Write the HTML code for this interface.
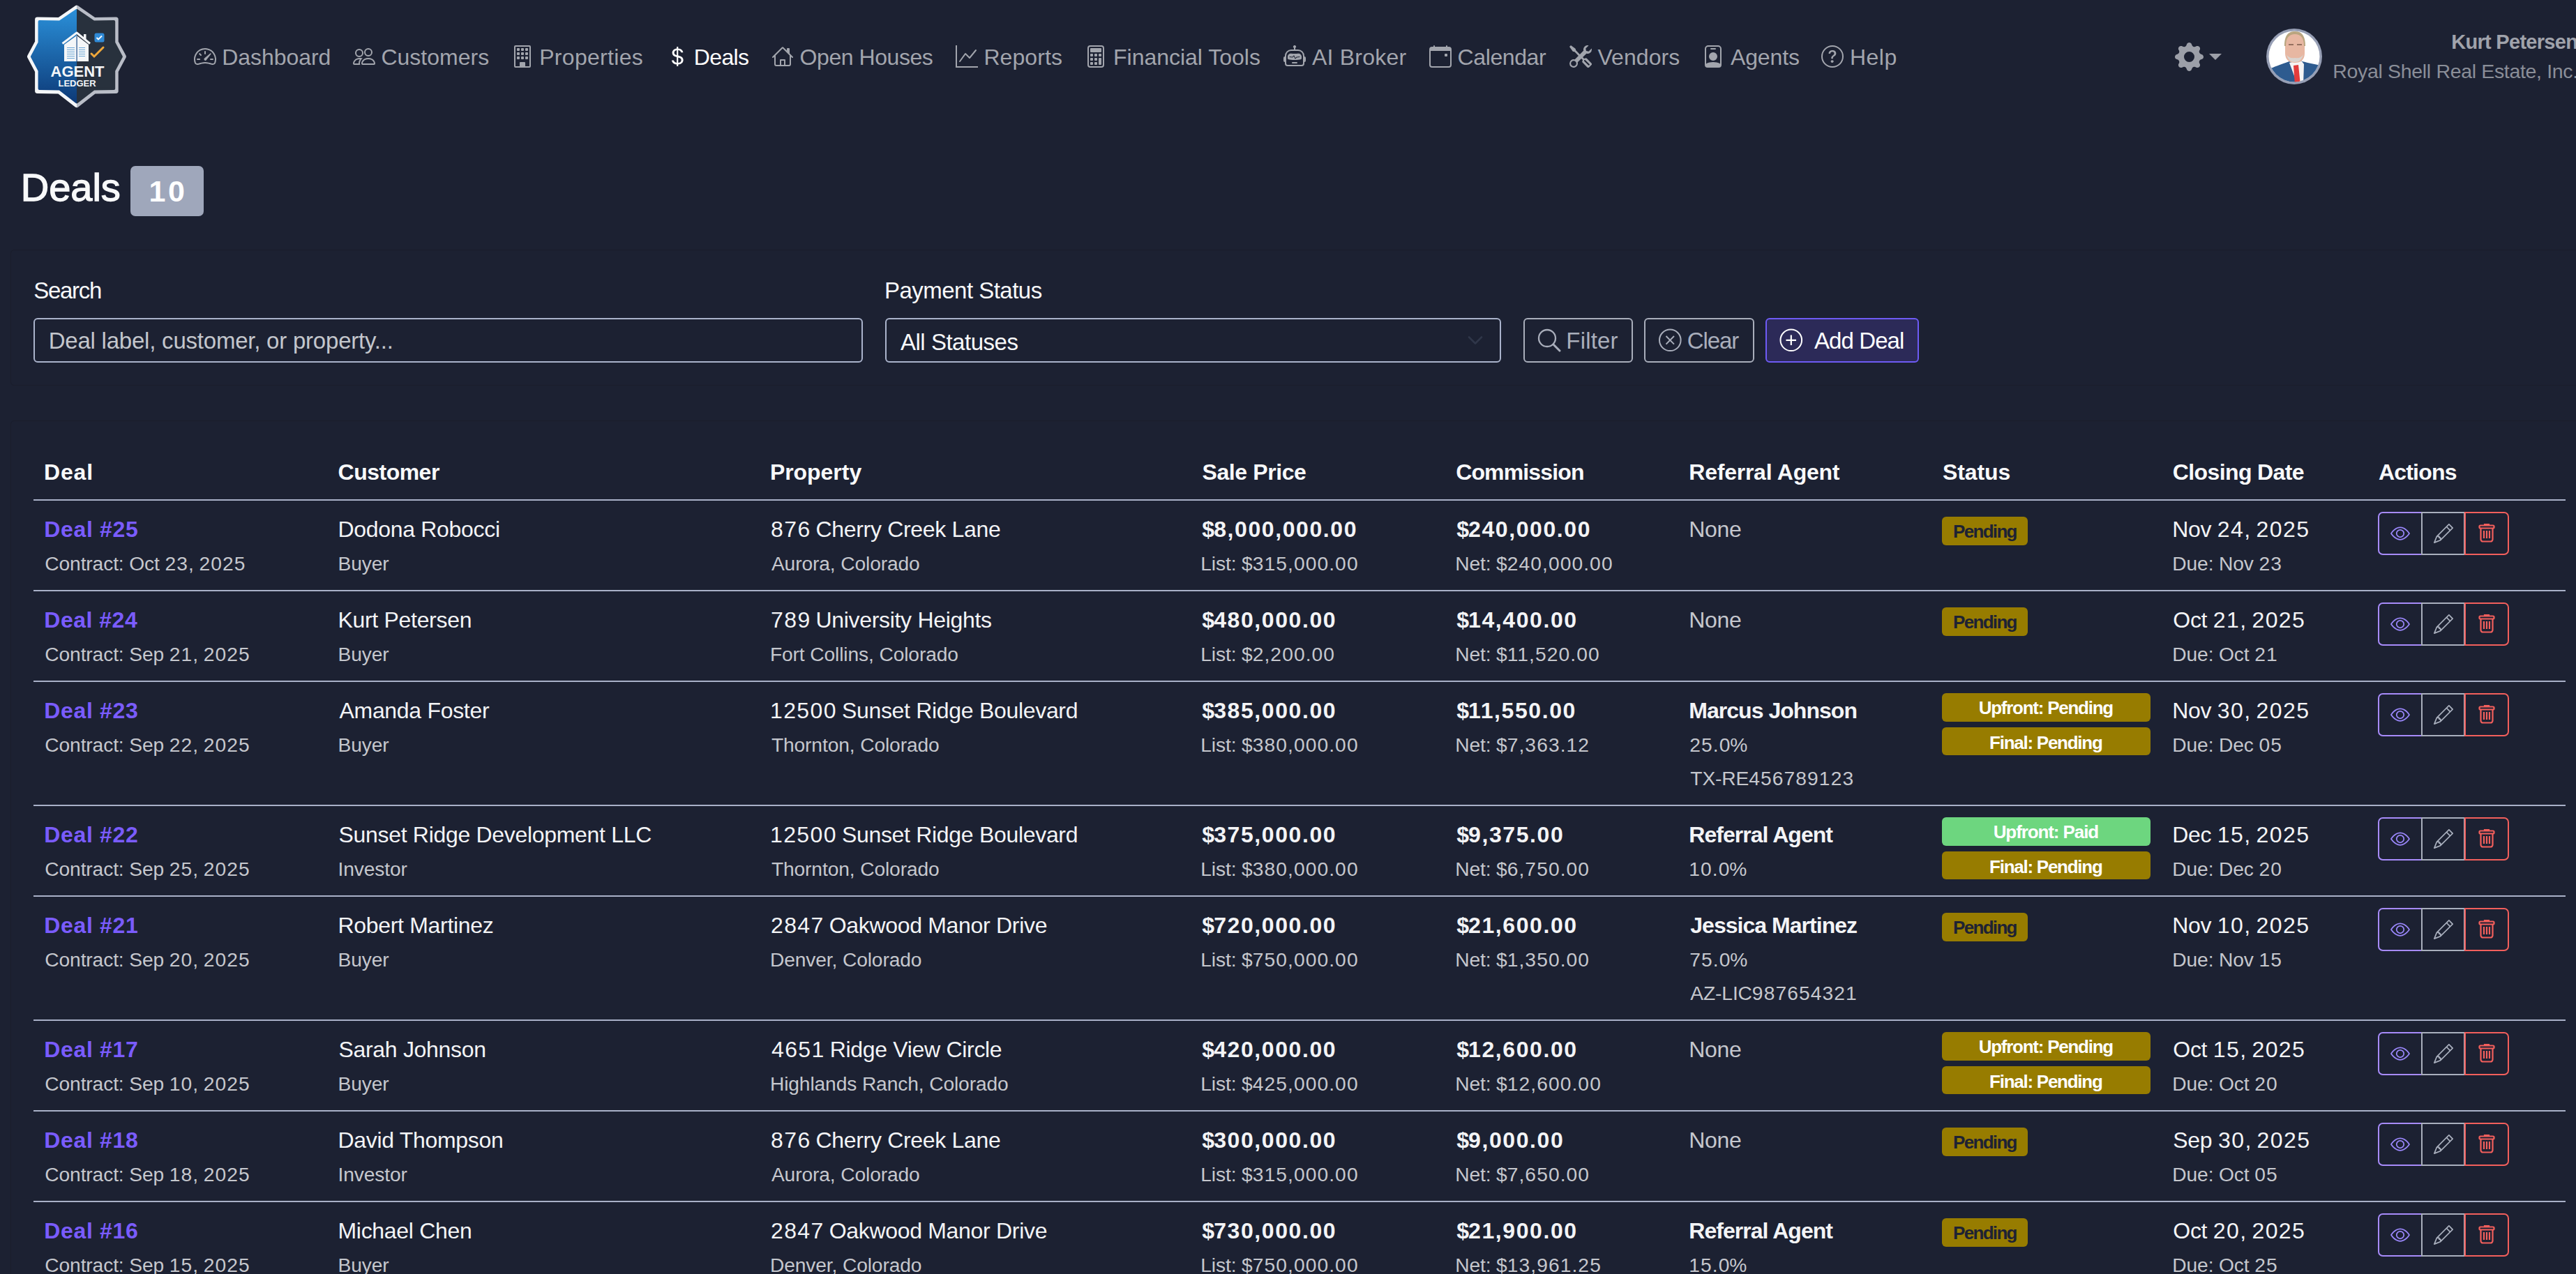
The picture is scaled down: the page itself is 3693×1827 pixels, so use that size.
<!DOCTYPE html>
<html><head><meta charset="utf-8"><style>
html,body{margin:0;padding:0}
body{width:3693px;height:1827px;overflow:hidden;position:relative;background:#1c2132;font-family:"Liberation Sans",sans-serif}
.t{position:absolute;white-space:nowrap}
</style></head><body>
<!-- logo -->
<svg style="position:absolute;left:0;top:0" width="220" height="170" viewBox="0 0 220 170">
 <defs>
  <linearGradient id="lg1" x1="0" y1="0" x2="0" y2="1"><stop offset="0" stop-color="#2a8fd8"/><stop offset="1" stop-color="#0d3a78"/></linearGradient>
  <clipPath id="cl"><rect x="0" y="0" width="110" height="170"/></clipPath>
  <clipPath id="cr"><rect x="110" y="0" width="110" height="170"/></clipPath>
 </defs>
 <g clip-path="url(#cr)"><polygon points="110.0,11.1 84.6,28.6 53.6,27.9 53.6,60.3 42.5,81.2 53.6,102.1 53.6,130.5 84.6,131.1 110.0,150.7 135.2,131.1 166.2,130.5 166.2,102.1 177.4,81.2 166.2,60.3 166.2,27.9 135.2,28.6" fill="#b9bdc7" stroke="#b9bdc7" stroke-width="7" stroke-linejoin="round"/></g>
 <g clip-path="url(#cl)"><polygon points="110.0,11.1 84.6,28.6 53.6,27.9 53.6,60.3 42.5,81.2 53.6,102.1 53.6,130.5 84.6,131.1 110.0,150.7 135.2,131.1 166.2,130.5 166.2,102.1 177.4,81.2 166.2,60.3 166.2,27.9 135.2,28.6" fill="#f4f6f8" stroke="#f4f6f8" stroke-width="7" stroke-linejoin="round"/></g>
 <g clip-path="url(#cl)"><polygon points="110.0,15.0 85.8,31.5 56.6,31.0 56.6,61.1 46.0,81.2 56.6,101.4 56.6,127.1 85.8,127.6 110.0,146.5 134.2,127.6 163.2,127.1 163.2,101.4 173.8,81.2 163.2,61.1 163.2,31.0 134.2,31.5" fill="url(#lg1)" stroke="url(#lg1)" stroke-width="4" stroke-linejoin="round"/></g>
 <g clip-path="url(#cr)"><polygon points="110.0,15.0 85.8,31.5 56.6,31.0 56.6,61.1 46.0,81.2 56.6,101.4 56.6,127.1 85.8,127.6 110.0,146.5 134.2,127.6 163.2,127.1 163.2,101.4 173.8,81.2 163.2,61.1 163.2,31.0 134.2,31.5" fill="#28313d" stroke="#28313d" stroke-width="4" stroke-linejoin="round"/></g>
 <!-- house -->
 <path d="M89.5 62.5 L110 47 L129 62.5" fill="none" stroke="#f4f6f8" stroke-width="3" stroke-linejoin="round"/>
 <rect x="120" y="49" width="3.5" height="8" fill="#f4f6f8"/>
 <path d="M92 64 L110 51 L127 64 V88 H92 Z" fill="#f4f6f8"/>
 <rect x="109.5" y="52" width="1.2" height="36" fill="#1e4f8a"/>
 <g stroke="#6aa6d6" stroke-width="1.1">
  <path d="M96 68.5h11M96 71.5h11M96 74.5h11M96 77.5h11M96 80.5h11M96 83.5h11"/>
  <path d="M113 68.5h9M113 71.5h9M113 74.5h9M113 77.5h9M113 80.5h9"/>
 </g>
 <rect x="135.5" y="47.5" width="14" height="13" rx="2.5" fill="#2f8ad6"/>
 <path d="M138.5 54 l2.5 2.5 l5-5" fill="none" stroke="#fff" stroke-width="1.8"/>
 <path d="M131 77 l4 4 l13-13" fill="none" stroke="#f0a83a" stroke-width="3" stroke-linecap="round"/>
 <text x="111" y="109.5" text-anchor="middle" font-family="Liberation Sans" font-weight="700" font-size="22" fill="#f4f6f8">AGENT</text>
 <text x="110.6" y="123.6" text-anchor="middle" font-family="Liberation Sans" font-weight="700" font-size="13" fill="#f4f6f8">LEDGER</text>
</svg>

<!-- nav icons -->
<svg style="position:absolute;left:278px;top:65px" width="32" height="32" viewBox="0 0 16 16" fill="#a2a5ad"><path d="M8 4a.5.5 0 0 1 .5.5V6a.5.5 0 0 1-1 0V4.5A.5.5 0 0 1 8 4M3.732 5.732a.5.5 0 0 1 .707 0l.915.914a.5.5 0 1 1-.708.708l-.914-.915a.5.5 0 0 1 0-.707M2 10a.5.5 0 0 1 .5-.5h1.586a.5.5 0 0 1 0 1H2.5A.5.5 0 0 1 2 10m9.5 0a.5.5 0 0 1 .5-.5h1.5a.5.5 0 0 1 0 1H12a.5.5 0 0 1-.5-.5m.754-4.246a.39.39 0 0 0-.527-.02L7.547 9.31a.91.91 0 1 0 1.302 1.258l3.434-4.297a.39.39 0 0 0-.029-.518z"/><path fill-rule="evenodd" d="M0 10a8 8 0 1 1 15.547 2.661c-.442 1.253-1.845 1.602-2.932 1.25C11.309 13.488 9.475 13 8 13c-1.474 0-3.31.488-4.615.911-1.087.352-2.49.003-2.932-1.25A8 8 0 0 1 0 10m8-7a7 7 0 0 0-6.603 9.329c.203.575.923.876 1.68.63C4.397 12.533 6.358 12 8 12s3.604.532 4.923.96c.757.245 1.477-.056 1.68-.631A7 7 0 0 0 8 3"/></svg>
<svg style="position:absolute;left:506px;top:65px" width="32" height="32" viewBox="0 0 16 16" fill="#a2a5ad"><path d="M15 14s1 0 1-1-1-4-5-4-5 3-5 4 1 1 1 1zm-7.978-1L7 12.996c.001-.264.167-1.03.76-1.72C8.312 10.629 9.282 10 11 10c1.717 0 2.687.63 3.24 1.276.593.69.758 1.457.76 1.72l-.008.002-.014.002zM11 7a2 2 0 1 0 0-4 2 2 0 0 0 0 4m3-2a3 3 0 1 1-6 0 3 3 0 0 1 6 0M6.936 9.28a6 6 0 0 0-1.23-.247A7 7 0 0 0 5 9c-4 0-5 3-5 4q0 1 1 1h4.216A2.24 2.24 0 0 1 5 13c0-1.01.377-2.042 1.09-2.904.243-.294.526-.569.846-.816M4.92 10A5.5 5.5 0 0 0 4 13H1c0-.26.164-1.03.76-1.724.545-.636 1.492-1.256 3.16-1.275ZM1.5 5.5a3 3 0 1 1 6 0 3 3 0 0 1-6 0m3-2a2 2 0 1 0 0 4 2 2 0 0 0 0-4"/></svg>
<svg style="position:absolute;left:733px;top:65px" width="32" height="32" viewBox="0 0 16 16" fill="#a2a5ad"><path d="M4 2.5a.5.5 0 0 1 .5-.5h1a.5.5 0 0 1 .5.5v1a.5.5 0 0 1-.5.5h-1a.5.5 0 0 1-.5-.5zm3 0a.5.5 0 0 1 .5-.5h1a.5.5 0 0 1 .5.5v1a.5.5 0 0 1-.5.5h-1a.5.5 0 0 1-.5-.5zm3.5-.5a.5.5 0 0 0-.5.5v1a.5.5 0 0 0 .5.5h1a.5.5 0 0 0 .5-.5v-1a.5.5 0 0 0-.5-.5zM4 5.5a.5.5 0 0 1 .5-.5h1a.5.5 0 0 1 .5.5v1a.5.5 0 0 1-.5.5h-1a.5.5 0 0 1-.5-.5zM7.5 5a.5.5 0 0 0-.5.5v1a.5.5 0 0 0 .5.5h1a.5.5 0 0 0 .5-.5v-1a.5.5 0 0 0-.5-.5zm2.5.5a.5.5 0 0 1 .5-.5h1a.5.5 0 0 1 .5.5v1a.5.5 0 0 1-.5.5h-1a.5.5 0 0 1-.5-.5zM4.5 8a.5.5 0 0 0-.5.5v1a.5.5 0 0 0 .5.5h1a.5.5 0 0 0 .5-.5v-1a.5.5 0 0 0-.5-.5zm2.5.5a.5.5 0 0 1 .5-.5h1a.5.5 0 0 1 .5.5v1a.5.5 0 0 1-.5.5h-1a.5.5 0 0 1-.5-.5zm3.5-.5a.5.5 0 0 0-.5.5v1a.5.5 0 0 0 .5.5h1a.5.5 0 0 0 .5-.5v-1a.5.5 0 0 0-.5-.5z"/><path d="M2 1a1 1 0 0 1 1-1h10a1 1 0 0 1 1 1v14a1 1 0 0 1-1 1H3a1 1 0 0 1-1-1zm11 0H3v14h3v-2.5a.5.5 0 0 1 .5-.5h3a.5.5 0 0 1 .5.5V15h3z"/></svg>
<svg style="position:absolute;left:955px;top:65px" width="32" height="32" viewBox="0 0 16 16" fill="#ffffff"><path d="M4 10.781c.148 1.667 1.513 2.85 3.591 3.003V15h1.043v-1.216c2.27-.179 3.678-1.438 3.678-3.3 0-1.59-.947-2.51-2.956-3.028l-.722-.187V3.467c1.122.11 1.879.714 2.07 1.616h1.47c-.166-1.6-1.54-2.748-3.54-2.875V1H7.591v1.233c-1.939.23-3.27 1.472-3.27 3.156 0 1.454.966 2.483 2.661 2.917l.61.162v4.031c-1.149-.17-1.94-.8-2.131-1.718zm3.391-3.836c-1.043-.263-1.6-.825-1.6-1.616 0-.944.704-1.641 1.8-1.828v3.495l-.2-.05zm1.591 1.872c1.287.323 1.852.859 1.852 1.769 0 1.097-.826 1.828-2.2 1.939V8.73z"/></svg>
<svg style="position:absolute;left:1106px;top:65px" width="32" height="32" viewBox="0 0 16 16" fill="#a2a5ad"><path d="M8.707 1.5a1 1 0 0 0-1.414 0L.646 8.146a.5.5 0 0 0 .708.708L2 8.207V13.5A1.5 1.5 0 0 0 3.5 15h9a1.5 1.5 0 0 0 1.5-1.5V8.207l.646.647a.5.5 0 0 0 .708-.708L13 5.793V2.5a.5.5 0 0 0-.5-.5h-1a.5.5 0 0 0-.5.5v1.293zM13 7.207V13.5a.5.5 0 0 1-.5.5h-9a.5.5 0 0 1-.5-.5V7.207l5-5z"/><path d="M6 15V10.5a.5.5 0 0 1 .5-.5h3a.5.5 0 0 1 .5.5V15h-1v-4H7v4z"/></svg>
<svg style="position:absolute;left:1370px;top:65px" width="32" height="32" viewBox="0 0 16 16" fill="#a2a5ad"><path fill-rule="evenodd" d="M0 0h1v15h15v1H0zm14.817 3.113a.5.5 0 0 1 .07.704l-4.5 5.5a.5.5 0 0 1-.74.037L7.06 6.767l-3.656 5.027a.5.5 0 0 1-.808-.588l4-5.5a.5.5 0 0 1 .758-.06l2.609 2.61 4.15-5.073a.5.5 0 0 1 .704-.07"/></svg>
<svg style="position:absolute;left:1555px;top:65px" width="32" height="32" viewBox="0 0 16 16" fill="#a2a5ad"><path d="M12 1a1 1 0 0 1 1 1v12a1 1 0 0 1-1 1H4a1 1 0 0 1-1-1V2a1 1 0 0 1 1-1zM4 0a2 2 0 0 0-2 2v12a2 2 0 0 0 2 2h8a2 2 0 0 0 2-2V2a2 2 0 0 0-2-2z"/><path d="M4 2.5a.5.5 0 0 1 .5-.5h7a.5.5 0 0 1 .5.5v2a.5.5 0 0 1-.5.5h-7a.5.5 0 0 1-.5-.5zm0 4a.5.5 0 0 1 .5-.5h1a.5.5 0 0 1 .5.5v1a.5.5 0 0 1-.5.5h-1a.5.5 0 0 1-.5-.5zm0 3a.5.5 0 0 1 .5-.5h1a.5.5 0 0 1 .5.5v1a.5.5 0 0 1-.5.5h-1a.5.5 0 0 1-.5-.5zm0 3a.5.5 0 0 1 .5-.5h1a.5.5 0 0 1 .5.5v1a.5.5 0 0 1-.5.5h-1a.5.5 0 0 1-.5-.5zm3-6a.5.5 0 0 1 .5-.5h1a.5.5 0 0 1 .5.5v1a.5.5 0 0 1-.5.5h-1a.5.5 0 0 1-.5-.5zm0 3a.5.5 0 0 1 .5-.5h1a.5.5 0 0 1 .5.5v1a.5.5 0 0 1-.5.5h-1a.5.5 0 0 1-.5-.5zm0 3a.5.5 0 0 1 .5-.5h1a.5.5 0 0 1 .5.5v1a.5.5 0 0 1-.5.5h-1a.5.5 0 0 1-.5-.5zm3-6a.5.5 0 0 1 .5-.5h1a.5.5 0 0 1 .5.5v1a.5.5 0 0 1-.5.5h-1a.5.5 0 0 1-.5-.5zm0 3a.5.5 0 0 1 .5-.5h1a.5.5 0 0 1 .5.5v4a.5.5 0 0 1-.5.5h-1a.5.5 0 0 1-.5-.5z"/></svg>
<svg style="position:absolute;left:1840px;top:65px" width="32" height="32" viewBox="0 0 16 16" fill="#a2a5ad"><path d="M6 12.5a.5.5 0 0 1 .5-.5h3a.5.5 0 0 1 0 1h-3a.5.5 0 0 1-.5-.5M3 8.062C3 6.76 4.235 5.765 5.53 5.886a26.6 26.6 0 0 0 4.94 0C11.765 5.765 13 6.76 13 8.062v1.157a.93.93 0 0 1-.765.935c-.845.147-2.34.346-4.235.346s-3.39-.2-4.235-.346A.93.93 0 0 1 3 9.219zm4.542-.827a.25.25 0 0 0-.217.068l-.92.9a25 25 0 0 1-1.871-.183.25.25 0 0 0-.068.495c.55.076 1.232.149 2.02.193a.25.25 0 0 0 .189-.071l.754-.736.847 1.71a.25.25 0 0 0 .404.062l.932-.97a25 25 0 0 0 1.922-.188.25.25 0 0 0-.068-.495c-.538.074-1.207.145-1.98.189a.25.25 0 0 0-.166.076l-.754.785-.842-1.7a.25.25 0 0 0-.182-.135"/><path d="M8.5 1.866a1 1 0 1 0-1 0V3h-2A4.5 4.5 0 0 0 1 7.5V8a1 1 0 0 0-1 1v2a1 1 0 0 0 1 1v1a2 2 0 0 0 2 2h10a2 2 0 0 0 2-2v-1a1 1 0 0 0 1-1V9a1 1 0 0 0-1-1v-.5A4.5 4.5 0 0 0 10.5 3h-2zM14 7.5V13a1 1 0 0 1-1 1H3a1 1 0 0 1-1-1V7.5A3.5 3.5 0 0 1 5.5 4h5A3.5 3.5 0 0 1 14 7.5"/></svg>
<svg style="position:absolute;left:2049px;top:65px" width="32" height="32" viewBox="0 0 16 16" fill="#a2a5ad"><path d="M3.5 0a.5.5 0 0 1 .5.5V1h8V.5a.5.5 0 0 1 1 0V1h1a2 2 0 0 1 2 2v11a2 2 0 0 1-2 2H2a2 2 0 0 1-2-2V3a2 2 0 0 1 2-2h1V.5a.5.5 0 0 1 .5-.5M1 4v10a1 1 0 0 0 1 1h12a1 1 0 0 0 1-1V4z"/><path d="M11 6.5a.5.5 0 0 1 .5-.5h1a.5.5 0 0 1 .5.5v1a.5.5 0 0 1-.5.5h-1a.5.5 0 0 1-.5-.5z"/></svg>
<svg style="position:absolute;left:2250px;top:65px" width="32" height="32" viewBox="0 0 16 16" fill="#a2a5ad"><path d="M1 0 0 1l2.2 3.081a1 1 0 0 0 .815.419h.07a1 1 0 0 1 .708.293l2.675 2.675-2.617 2.654A3.003 3.003 0 0 0 0 13a3 3 0 1 0 5.878-.851l2.654-2.617.968.968-.305.914a1 1 0 0 0 .242 1.023l3.27 3.27a.997.997 0 0 0 1.414 0l1.586-1.586a.997.997 0 0 0 0-1.414l-3.27-3.27a1 1 0 0 0-1.023-.242L10.5 9.5l-.96-.96 2.68-2.643A3.005 3.005 0 0 0 16 3q0-.405-.102-.777l-2.14 2.141L12 4l-.364-1.757L13.777.102a3 3 0 0 0-3.675 3.68L7.462 6.46 4.793 3.793a1 1 0 0 1-.293-.707v-.071a1 1 0 0 0-.419-.814zm9.646 10.646a.5.5 0 0 1 .708 0l2.914 2.915a.5.5 0 0 1-.707.707l-2.915-2.914a.5.5 0 0 1 0-.708M3 11l.471.242.529.026.287.445.445.287.026.529L5 13l-.242.471-.026.529-.445.287-.287.445-.529.026L3 15l-.471-.242L2 14.732l-.287-.445L1.268 14l-.026-.529L1 13l.242-.471.026-.529.445-.287.287-.445.529-.026z"/></svg>
<svg style="position:absolute;left:2440px;top:65px" width="32" height="32" viewBox="0 0 16 16" fill="#a2a5ad"><path d="M6.5 2a.5.5 0 0 0 0 1h3a.5.5 0 0 0 0-1zM11 8a3 3 0 1 1-6 0 3 3 0 0 1 6 0"/><path d="M4.5 0A2.5 2.5 0 0 0 2 2.5V14a2 2 0 0 0 2 2h8a2 2 0 0 0 2-2V2.5A2.5 2.5 0 0 0 11.5 0zM3 2.5A1.5 1.5 0 0 1 4.5 1h7A1.5 1.5 0 0 1 13 2.5v10.795a4.2 4.2 0 0 0-.776-.492C11.392 12.387 10.063 12 8 12s-3.392.387-4.224.803a4.2 4.2 0 0 0-.776.492z"/></svg>
<svg style="position:absolute;left:2611px;top:65px" width="32" height="32" viewBox="0 0 16 16" fill="#a2a5ad"><path d="M8 15A7 7 0 1 1 8 1a7 7 0 0 1 0 14m0 1A8 8 0 1 0 8 0a8 8 0 0 0 0 16"/><path d="M5.255 5.786a.237.237 0 0 0 .241.247h.825c.138 0 .248-.113.266-.25.09-.656.54-1.134 1.342-1.134.686 0 1.314.343 1.314 1.168 0 .635-.374.927-.965 1.371-.673.489-1.206 1.06-1.168 1.987l.003.217a.25.25 0 0 0 .25.246h.811a.25.25 0 0 0 .25-.25v-.105c0-.718.273-.927 1.01-1.486.609-.463 1.244-.977 1.244-2.056 0-1.511-1.276-2.241-2.673-2.241-1.267 0-2.655.59-2.75 2.286m1.557 5.763c0 .533.425.927 1.01.927.609 0 1.028-.394 1.028-.927 0-.552-.42-.94-1.029-.94-.584 0-1.009.388-1.009.94"/></svg>

<!-- gear + caret -->
<svg style="position:absolute;left:3117.5px;top:60.5px" width="41" height="41" viewBox="0 0 16 16" fill="#9c9fa8"><path d="M9.405 1.05c-.413-1.4-2.397-1.4-2.81 0l-.1.34a1.464 1.464 0 0 1-2.105.872l-.31-.17c-1.283-.698-2.686.705-1.987 1.987l.169.311c.446.82.023 1.841-.872 2.105l-.34.1c-1.4.413-1.4 2.397 0 2.81l.34.1a1.464 1.464 0 0 1 .872 2.105l-.17.31c-.698 1.283.705 2.686 1.987 1.987l.311-.169a1.464 1.464 0 0 1 2.105.872l.1.34c.413 1.4 2.397 1.4 2.81 0l.1-.34a1.464 1.464 0 0 1 2.105-.872l.31.17c1.283.698 2.686-.705 1.987-1.987l-.169-.311a1.464 1.464 0 0 1 .872-2.105l.34-.1c1.4-.413 1.4-2.397 0-2.81l-.34-.1a1.464 1.464 0 0 1-.872-2.105l.17-.31c.698-1.283-.705-2.686-1.987-1.987l-.311.169a1.464 1.464 0 0 1-2.105-.872zM8 10.93a2.929 2.929 0 1 1 0-5.86 2.929 2.929 0 0 1 0 5.858z"/></svg>
<div style="position:absolute;left:3167px;top:77px;width:0;height:0;border-left:9px solid transparent;border-right:9px solid transparent;border-top:9px solid #9c9fa8"></div>

<!-- avatar -->
<svg style="position:absolute;left:3248px;top:40px" width="82" height="82" viewBox="0 0 82 82">
 <defs><clipPath id="av"><circle cx="41" cy="41" r="36.5"/></clipPath></defs>
 <circle cx="41" cy="41" r="40" fill="#979fb5"/>
 <g clip-path="url(#av)">
  <rect width="82" height="82" fill="#ffffff"/>
  <path d="M0 82 L2 60 C10 57 20 53 34 48 L41 50 L50 47 C58 50 68 52 80 54 L82 82 Z" fill="#2e5b8f"/>
  <path d="M34 50 L42 48 L52 48 L55 52 L54 82 L46 82 Z" fill="#f4f4f4"/>
  <path d="M40 54 L47 53 L50 82 L42 82 Z" fill="#e23c3c"/>
  <path d="M28 22 C28 10 34 6 42 6 C50 6 56 10 56 22 L56 36 C56 46 50 50 42 50 C34 50 28 46 28 36 Z" fill="#e7b7a2"/>
  <path d="M30 38 C32 46 36 49 42 49 C48 49 52 46 54 38 C52 42 48 44 42 43 C36 44 32 42 30 38 Z" fill="#d9d4d0"/>
  <path d="M27 26 C27 10 33 5 42 5 C51 5 57 10 57 26 L55 26 C55 14 50 9 42 9 C34 9 29 14 29 26 Z" fill="#b9a57f"/>
  <path d="M33 24 h7 M45 24 h7" stroke="#7a5a4a" stroke-width="1.4"/>
 </g>
</svg>

<!-- badge 10 -->
<div style="position:absolute;left:187px;top:238px;width:105px;height:72px;border-radius:7px;background:#9fa7bb"></div>

<!-- filter card -->
<div style="position:absolute;left:15px;top:358px;width:3700px;height:193px;border:1px solid #1a1d2b;border-radius:5px"></div>
<div style="position:absolute;left:48px;top:456px;width:1185px;height:60px;border:2px solid #aab3cb;border-radius:6px"></div>
<div style="position:absolute;left:1269px;top:456px;width:879px;height:60px;border:2px solid #aab3cb;border-radius:6px"></div>
<svg style="position:absolute;left:2103px;top:480px" width="24" height="16" viewBox="0 0 24 16"><path d="M3 3.5 L12 12.5 L21 3.5" fill="none" stroke="#2f3649" stroke-width="2.6" stroke-linecap="round" stroke-linejoin="round"/></svg>
<div style="position:absolute;left:2184px;top:456px;width:153px;height:60px;border:2px solid #a9aebb;border-radius:6px"></div>
<div style="position:absolute;left:2357px;top:456px;width:154px;height:60px;border:2px solid #a9aebb;border-radius:6px"></div>
<div style="position:absolute;left:2531px;top:456px;width:216px;height:60px;border:2px solid #6e5bf5;border-radius:6px;background:#2c2a58"></div>
<svg style="position:absolute;left:2204px;top:471px" width="34" height="34" viewBox="0 0 34 34"><circle cx="14" cy="14" r="12" fill="none" stroke="#a9aebb" stroke-width="2.3"/><path d="M23 23 L32 32" stroke="#a9aebb" stroke-width="3" stroke-linecap="round"/></svg>
<svg style="position:absolute;left:2377px;top:471px" width="35" height="35" viewBox="0 0 35 35"><circle cx="17.3" cy="16.8" r="15.3" fill="none" stroke="#a9aebb" stroke-width="2"/><path d="M11.5 11 L23 22.6 M23 11 L11.5 22.6" stroke="#a9aebb" stroke-width="2"/></svg>
<svg style="position:absolute;left:2550px;top:471px" width="35" height="35" viewBox="0 0 35 35"><circle cx="17.8" cy="16.8" r="15.3" fill="none" stroke="#ffffff" stroke-width="2"/><path d="M17.8 9.5 V24 M10.5 16.8 H25" stroke="#ffffff" stroke-width="2.2"/></svg>

<!-- table card -->
<div style="position:absolute;left:15px;top:603px;width:3700px;height:1500px;border:1px solid #1a1d2b;border-radius:5px"></div>

<div style="position:absolute;left:48px;top:716px;width:3630px;height:2px;background:#a9b1c8"></div><div style="position:absolute;left:48px;top:846px;width:3630px;height:2px;background:#a9b1c8"></div><div style="position:absolute;left:48px;top:976px;width:3630px;height:2px;background:#a9b1c8"></div><div style="position:absolute;left:48px;top:1154px;width:3630px;height:2px;background:#a9b1c8"></div><div style="position:absolute;left:48px;top:1284px;width:3630px;height:2px;background:#a9b1c8"></div><div style="position:absolute;left:48px;top:1462px;width:3630px;height:2px;background:#a9b1c8"></div><div style="position:absolute;left:48px;top:1592px;width:3630px;height:2px;background:#a9b1c8"></div><div style="position:absolute;left:48px;top:1722px;width:3630px;height:2px;background:#a9b1c8"></div><div style="position:absolute;left:48px;top:1852px;width:3630px;height:2px;background:#a9b1c8"></div><div style="position:absolute;left:48px;top:716px;width:3630px;height:2px;background:#a9b1c8"></div><div style="position:absolute;left:2784px;top:741px;width:123px;height:41px;border-radius:6px;background:#977c00"></div><div style="position:absolute;left:3409px;top:734px;width:188px;height:62px">
 <div style="position:absolute;left:0;top:0;width:60px;height:58px;border:2px solid #a78bfa;border-radius:7px 0 0 7px"></div>
 <div style="position:absolute;left:62px;top:0;width:59px;height:58px;border:2px solid #a9afbd;border-left:2px solid #a9afbd"></div>
 <div style="position:absolute;left:124px;top:0;width:60px;height:58px;border:2px solid #f25f5c;border-radius:0 7px 7px 0"></div>
 <svg style="position:absolute;left:18px;top:17px" width="28" height="28" viewBox="0 0 16 16" fill="#9a87fb"><path d="M16 8s-3-5.5-8-5.5S0 8 0 8s3 5.5 8 5.5S16 8 16 8M1.173 8a13 13 0 0 1 1.66-2.043C4.12 4.668 5.88 3.5 8 3.5s3.879 1.168 5.168 2.457A13 13 0 0 1 14.828 8q-.086.13-.195.288c-.335.48-.83 1.12-1.465 1.755C11.879 11.332 10.119 12.5 8 12.5s-3.879-1.168-5.168-2.457A13 13 0 0 1 1.172 8z"/><path d="M8 5.5a2.5 2.5 0 1 0 0 5 2.5 2.5 0 0 0 0-5M4.5 8a3.5 3.5 0 1 1 7 0 3.5 3.5 0 0 1-7 0"/></svg>
 <svg style="position:absolute;left:80px;top:17px" width="28" height="28" viewBox="0 0 16 16" fill="#a9afbd"><path d="M12.146.146a.5.5 0 0 1 .708 0l3 3a.5.5 0 0 1 0 .708l-10 10a.5.5 0 0 1-.168.11l-5 2a.5.5 0 0 1-.65-.65l2-5a.5.5 0 0 1 .11-.168zM11.207 2.5 13.5 4.793 14.793 3.5 12.5 1.207zm1.586 3L10.5 3.207 4 9.707V10h.5a.5.5 0 0 1 .5.5v.5h.5a.5.5 0 0 1 .5.5v.5h.293zm-9.761 5.175-.106.106-1.528 3.821 3.821-1.528.106-.106A.5.5 0 0 1 5 12.5V12h-.5a.5.5 0 0 1-.5-.5V11h-.5a.5.5 0 0 1-.468-.325"/></svg>
 <svg style="position:absolute;left:144px;top:16px" width="24" height="28" viewBox="0 0 24 28" fill="none" stroke="#f25f5c" stroke-width="2.2"><rect x="1.5" y="3.5" width="21" height="4" rx="1.5"/><path d="M9 3.2V2.2h6v1"/><path d="M3.5 8v15.5a3 3 0 0 0 3 3h11a3 3 0 0 0 3-3V8"/><path d="M8 11v11M12 11v11M16 11v11"/></svg>
</div><div style="position:absolute;left:2784px;top:871px;width:123px;height:41px;border-radius:6px;background:#977c00"></div><div style="position:absolute;left:3409px;top:864px;width:188px;height:62px">
 <div style="position:absolute;left:0;top:0;width:60px;height:58px;border:2px solid #a78bfa;border-radius:7px 0 0 7px"></div>
 <div style="position:absolute;left:62px;top:0;width:59px;height:58px;border:2px solid #a9afbd;border-left:2px solid #a9afbd"></div>
 <div style="position:absolute;left:124px;top:0;width:60px;height:58px;border:2px solid #f25f5c;border-radius:0 7px 7px 0"></div>
 <svg style="position:absolute;left:18px;top:17px" width="28" height="28" viewBox="0 0 16 16" fill="#9a87fb"><path d="M16 8s-3-5.5-8-5.5S0 8 0 8s3 5.5 8 5.5S16 8 16 8M1.173 8a13 13 0 0 1 1.66-2.043C4.12 4.668 5.88 3.5 8 3.5s3.879 1.168 5.168 2.457A13 13 0 0 1 14.828 8q-.086.13-.195.288c-.335.48-.83 1.12-1.465 1.755C11.879 11.332 10.119 12.5 8 12.5s-3.879-1.168-5.168-2.457A13 13 0 0 1 1.172 8z"/><path d="M8 5.5a2.5 2.5 0 1 0 0 5 2.5 2.5 0 0 0 0-5M4.5 8a3.5 3.5 0 1 1 7 0 3.5 3.5 0 0 1-7 0"/></svg>
 <svg style="position:absolute;left:80px;top:17px" width="28" height="28" viewBox="0 0 16 16" fill="#a9afbd"><path d="M12.146.146a.5.5 0 0 1 .708 0l3 3a.5.5 0 0 1 0 .708l-10 10a.5.5 0 0 1-.168.11l-5 2a.5.5 0 0 1-.65-.65l2-5a.5.5 0 0 1 .11-.168zM11.207 2.5 13.5 4.793 14.793 3.5 12.5 1.207zm1.586 3L10.5 3.207 4 9.707V10h.5a.5.5 0 0 1 .5.5v.5h.5a.5.5 0 0 1 .5.5v.5h.293zm-9.761 5.175-.106.106-1.528 3.821 3.821-1.528.106-.106A.5.5 0 0 1 5 12.5V12h-.5a.5.5 0 0 1-.5-.5V11h-.5a.5.5 0 0 1-.468-.325"/></svg>
 <svg style="position:absolute;left:144px;top:16px" width="24" height="28" viewBox="0 0 24 28" fill="none" stroke="#f25f5c" stroke-width="2.2"><rect x="1.5" y="3.5" width="21" height="4" rx="1.5"/><path d="M9 3.2V2.2h6v1"/><path d="M3.5 8v15.5a3 3 0 0 0 3 3h11a3 3 0 0 0 3-3V8"/><path d="M8 11v11M12 11v11M16 11v11"/></svg>
</div><div style="position:absolute;left:2784px;top:994.0px;width:299px;height:40.5px;border-radius:6px;background:#977c00"></div><div style="position:absolute;left:2784px;top:1042.9px;width:299px;height:40.5px;border-radius:6px;background:#977c00"></div><div style="position:absolute;left:3409px;top:994px;width:188px;height:62px">
 <div style="position:absolute;left:0;top:0;width:60px;height:58px;border:2px solid #a78bfa;border-radius:7px 0 0 7px"></div>
 <div style="position:absolute;left:62px;top:0;width:59px;height:58px;border:2px solid #a9afbd;border-left:2px solid #a9afbd"></div>
 <div style="position:absolute;left:124px;top:0;width:60px;height:58px;border:2px solid #f25f5c;border-radius:0 7px 7px 0"></div>
 <svg style="position:absolute;left:18px;top:17px" width="28" height="28" viewBox="0 0 16 16" fill="#9a87fb"><path d="M16 8s-3-5.5-8-5.5S0 8 0 8s3 5.5 8 5.5S16 8 16 8M1.173 8a13 13 0 0 1 1.66-2.043C4.12 4.668 5.88 3.5 8 3.5s3.879 1.168 5.168 2.457A13 13 0 0 1 14.828 8q-.086.13-.195.288c-.335.48-.83 1.12-1.465 1.755C11.879 11.332 10.119 12.5 8 12.5s-3.879-1.168-5.168-2.457A13 13 0 0 1 1.172 8z"/><path d="M8 5.5a2.5 2.5 0 1 0 0 5 2.5 2.5 0 0 0 0-5M4.5 8a3.5 3.5 0 1 1 7 0 3.5 3.5 0 0 1-7 0"/></svg>
 <svg style="position:absolute;left:80px;top:17px" width="28" height="28" viewBox="0 0 16 16" fill="#a9afbd"><path d="M12.146.146a.5.5 0 0 1 .708 0l3 3a.5.5 0 0 1 0 .708l-10 10a.5.5 0 0 1-.168.11l-5 2a.5.5 0 0 1-.65-.65l2-5a.5.5 0 0 1 .11-.168zM11.207 2.5 13.5 4.793 14.793 3.5 12.5 1.207zm1.586 3L10.5 3.207 4 9.707V10h.5a.5.5 0 0 1 .5.5v.5h.5a.5.5 0 0 1 .5.5v.5h.293zm-9.761 5.175-.106.106-1.528 3.821 3.821-1.528.106-.106A.5.5 0 0 1 5 12.5V12h-.5a.5.5 0 0 1-.5-.5V11h-.5a.5.5 0 0 1-.468-.325"/></svg>
 <svg style="position:absolute;left:144px;top:16px" width="24" height="28" viewBox="0 0 24 28" fill="none" stroke="#f25f5c" stroke-width="2.2"><rect x="1.5" y="3.5" width="21" height="4" rx="1.5"/><path d="M9 3.2V2.2h6v1"/><path d="M3.5 8v15.5a3 3 0 0 0 3 3h11a3 3 0 0 0 3-3V8"/><path d="M8 11v11M12 11v11M16 11v11"/></svg>
</div><div style="position:absolute;left:2784px;top:1172.0px;width:299px;height:40.5px;border-radius:6px;background:#6dd67f"></div><div style="position:absolute;left:2784px;top:1220.9px;width:299px;height:40.5px;border-radius:6px;background:#977c00"></div><div style="position:absolute;left:3409px;top:1172px;width:188px;height:62px">
 <div style="position:absolute;left:0;top:0;width:60px;height:58px;border:2px solid #a78bfa;border-radius:7px 0 0 7px"></div>
 <div style="position:absolute;left:62px;top:0;width:59px;height:58px;border:2px solid #a9afbd;border-left:2px solid #a9afbd"></div>
 <div style="position:absolute;left:124px;top:0;width:60px;height:58px;border:2px solid #f25f5c;border-radius:0 7px 7px 0"></div>
 <svg style="position:absolute;left:18px;top:17px" width="28" height="28" viewBox="0 0 16 16" fill="#9a87fb"><path d="M16 8s-3-5.5-8-5.5S0 8 0 8s3 5.5 8 5.5S16 8 16 8M1.173 8a13 13 0 0 1 1.66-2.043C4.12 4.668 5.88 3.5 8 3.5s3.879 1.168 5.168 2.457A13 13 0 0 1 14.828 8q-.086.13-.195.288c-.335.48-.83 1.12-1.465 1.755C11.879 11.332 10.119 12.5 8 12.5s-3.879-1.168-5.168-2.457A13 13 0 0 1 1.172 8z"/><path d="M8 5.5a2.5 2.5 0 1 0 0 5 2.5 2.5 0 0 0 0-5M4.5 8a3.5 3.5 0 1 1 7 0 3.5 3.5 0 0 1-7 0"/></svg>
 <svg style="position:absolute;left:80px;top:17px" width="28" height="28" viewBox="0 0 16 16" fill="#a9afbd"><path d="M12.146.146a.5.5 0 0 1 .708 0l3 3a.5.5 0 0 1 0 .708l-10 10a.5.5 0 0 1-.168.11l-5 2a.5.5 0 0 1-.65-.65l2-5a.5.5 0 0 1 .11-.168zM11.207 2.5 13.5 4.793 14.793 3.5 12.5 1.207zm1.586 3L10.5 3.207 4 9.707V10h.5a.5.5 0 0 1 .5.5v.5h.5a.5.5 0 0 1 .5.5v.5h.293zm-9.761 5.175-.106.106-1.528 3.821 3.821-1.528.106-.106A.5.5 0 0 1 5 12.5V12h-.5a.5.5 0 0 1-.5-.5V11h-.5a.5.5 0 0 1-.468-.325"/></svg>
 <svg style="position:absolute;left:144px;top:16px" width="24" height="28" viewBox="0 0 24 28" fill="none" stroke="#f25f5c" stroke-width="2.2"><rect x="1.5" y="3.5" width="21" height="4" rx="1.5"/><path d="M9 3.2V2.2h6v1"/><path d="M3.5 8v15.5a3 3 0 0 0 3 3h11a3 3 0 0 0 3-3V8"/><path d="M8 11v11M12 11v11M16 11v11"/></svg>
</div><div style="position:absolute;left:2784px;top:1309px;width:123px;height:41px;border-radius:6px;background:#977c00"></div><div style="position:absolute;left:3409px;top:1302px;width:188px;height:62px">
 <div style="position:absolute;left:0;top:0;width:60px;height:58px;border:2px solid #a78bfa;border-radius:7px 0 0 7px"></div>
 <div style="position:absolute;left:62px;top:0;width:59px;height:58px;border:2px solid #a9afbd;border-left:2px solid #a9afbd"></div>
 <div style="position:absolute;left:124px;top:0;width:60px;height:58px;border:2px solid #f25f5c;border-radius:0 7px 7px 0"></div>
 <svg style="position:absolute;left:18px;top:17px" width="28" height="28" viewBox="0 0 16 16" fill="#9a87fb"><path d="M16 8s-3-5.5-8-5.5S0 8 0 8s3 5.5 8 5.5S16 8 16 8M1.173 8a13 13 0 0 1 1.66-2.043C4.12 4.668 5.88 3.5 8 3.5s3.879 1.168 5.168 2.457A13 13 0 0 1 14.828 8q-.086.13-.195.288c-.335.48-.83 1.12-1.465 1.755C11.879 11.332 10.119 12.5 8 12.5s-3.879-1.168-5.168-2.457A13 13 0 0 1 1.172 8z"/><path d="M8 5.5a2.5 2.5 0 1 0 0 5 2.5 2.5 0 0 0 0-5M4.5 8a3.5 3.5 0 1 1 7 0 3.5 3.5 0 0 1-7 0"/></svg>
 <svg style="position:absolute;left:80px;top:17px" width="28" height="28" viewBox="0 0 16 16" fill="#a9afbd"><path d="M12.146.146a.5.5 0 0 1 .708 0l3 3a.5.5 0 0 1 0 .708l-10 10a.5.5 0 0 1-.168.11l-5 2a.5.5 0 0 1-.65-.65l2-5a.5.5 0 0 1 .11-.168zM11.207 2.5 13.5 4.793 14.793 3.5 12.5 1.207zm1.586 3L10.5 3.207 4 9.707V10h.5a.5.5 0 0 1 .5.5v.5h.5a.5.5 0 0 1 .5.5v.5h.293zm-9.761 5.175-.106.106-1.528 3.821 3.821-1.528.106-.106A.5.5 0 0 1 5 12.5V12h-.5a.5.5 0 0 1-.5-.5V11h-.5a.5.5 0 0 1-.468-.325"/></svg>
 <svg style="position:absolute;left:144px;top:16px" width="24" height="28" viewBox="0 0 24 28" fill="none" stroke="#f25f5c" stroke-width="2.2"><rect x="1.5" y="3.5" width="21" height="4" rx="1.5"/><path d="M9 3.2V2.2h6v1"/><path d="M3.5 8v15.5a3 3 0 0 0 3 3h11a3 3 0 0 0 3-3V8"/><path d="M8 11v11M12 11v11M16 11v11"/></svg>
</div><div style="position:absolute;left:2784px;top:1480.0px;width:299px;height:40.5px;border-radius:6px;background:#977c00"></div><div style="position:absolute;left:2784px;top:1528.9px;width:299px;height:40.5px;border-radius:6px;background:#977c00"></div><div style="position:absolute;left:3409px;top:1480px;width:188px;height:62px">
 <div style="position:absolute;left:0;top:0;width:60px;height:58px;border:2px solid #a78bfa;border-radius:7px 0 0 7px"></div>
 <div style="position:absolute;left:62px;top:0;width:59px;height:58px;border:2px solid #a9afbd;border-left:2px solid #a9afbd"></div>
 <div style="position:absolute;left:124px;top:0;width:60px;height:58px;border:2px solid #f25f5c;border-radius:0 7px 7px 0"></div>
 <svg style="position:absolute;left:18px;top:17px" width="28" height="28" viewBox="0 0 16 16" fill="#9a87fb"><path d="M16 8s-3-5.5-8-5.5S0 8 0 8s3 5.5 8 5.5S16 8 16 8M1.173 8a13 13 0 0 1 1.66-2.043C4.12 4.668 5.88 3.5 8 3.5s3.879 1.168 5.168 2.457A13 13 0 0 1 14.828 8q-.086.13-.195.288c-.335.48-.83 1.12-1.465 1.755C11.879 11.332 10.119 12.5 8 12.5s-3.879-1.168-5.168-2.457A13 13 0 0 1 1.172 8z"/><path d="M8 5.5a2.5 2.5 0 1 0 0 5 2.5 2.5 0 0 0 0-5M4.5 8a3.5 3.5 0 1 1 7 0 3.5 3.5 0 0 1-7 0"/></svg>
 <svg style="position:absolute;left:80px;top:17px" width="28" height="28" viewBox="0 0 16 16" fill="#a9afbd"><path d="M12.146.146a.5.5 0 0 1 .708 0l3 3a.5.5 0 0 1 0 .708l-10 10a.5.5 0 0 1-.168.11l-5 2a.5.5 0 0 1-.65-.65l2-5a.5.5 0 0 1 .11-.168zM11.207 2.5 13.5 4.793 14.793 3.5 12.5 1.207zm1.586 3L10.5 3.207 4 9.707V10h.5a.5.5 0 0 1 .5.5v.5h.5a.5.5 0 0 1 .5.5v.5h.293zm-9.761 5.175-.106.106-1.528 3.821 3.821-1.528.106-.106A.5.5 0 0 1 5 12.5V12h-.5a.5.5 0 0 1-.5-.5V11h-.5a.5.5 0 0 1-.468-.325"/></svg>
 <svg style="position:absolute;left:144px;top:16px" width="24" height="28" viewBox="0 0 24 28" fill="none" stroke="#f25f5c" stroke-width="2.2"><rect x="1.5" y="3.5" width="21" height="4" rx="1.5"/><path d="M9 3.2V2.2h6v1"/><path d="M3.5 8v15.5a3 3 0 0 0 3 3h11a3 3 0 0 0 3-3V8"/><path d="M8 11v11M12 11v11M16 11v11"/></svg>
</div><div style="position:absolute;left:2784px;top:1617px;width:123px;height:41px;border-radius:6px;background:#977c00"></div><div style="position:absolute;left:3409px;top:1610px;width:188px;height:62px">
 <div style="position:absolute;left:0;top:0;width:60px;height:58px;border:2px solid #a78bfa;border-radius:7px 0 0 7px"></div>
 <div style="position:absolute;left:62px;top:0;width:59px;height:58px;border:2px solid #a9afbd;border-left:2px solid #a9afbd"></div>
 <div style="position:absolute;left:124px;top:0;width:60px;height:58px;border:2px solid #f25f5c;border-radius:0 7px 7px 0"></div>
 <svg style="position:absolute;left:18px;top:17px" width="28" height="28" viewBox="0 0 16 16" fill="#9a87fb"><path d="M16 8s-3-5.5-8-5.5S0 8 0 8s3 5.5 8 5.5S16 8 16 8M1.173 8a13 13 0 0 1 1.66-2.043C4.12 4.668 5.88 3.5 8 3.5s3.879 1.168 5.168 2.457A13 13 0 0 1 14.828 8q-.086.13-.195.288c-.335.48-.83 1.12-1.465 1.755C11.879 11.332 10.119 12.5 8 12.5s-3.879-1.168-5.168-2.457A13 13 0 0 1 1.172 8z"/><path d="M8 5.5a2.5 2.5 0 1 0 0 5 2.5 2.5 0 0 0 0-5M4.5 8a3.5 3.5 0 1 1 7 0 3.5 3.5 0 0 1-7 0"/></svg>
 <svg style="position:absolute;left:80px;top:17px" width="28" height="28" viewBox="0 0 16 16" fill="#a9afbd"><path d="M12.146.146a.5.5 0 0 1 .708 0l3 3a.5.5 0 0 1 0 .708l-10 10a.5.5 0 0 1-.168.11l-5 2a.5.5 0 0 1-.65-.65l2-5a.5.5 0 0 1 .11-.168zM11.207 2.5 13.5 4.793 14.793 3.5 12.5 1.207zm1.586 3L10.5 3.207 4 9.707V10h.5a.5.5 0 0 1 .5.5v.5h.5a.5.5 0 0 1 .5.5v.5h.293zm-9.761 5.175-.106.106-1.528 3.821 3.821-1.528.106-.106A.5.5 0 0 1 5 12.5V12h-.5a.5.5 0 0 1-.5-.5V11h-.5a.5.5 0 0 1-.468-.325"/></svg>
 <svg style="position:absolute;left:144px;top:16px" width="24" height="28" viewBox="0 0 24 28" fill="none" stroke="#f25f5c" stroke-width="2.2"><rect x="1.5" y="3.5" width="21" height="4" rx="1.5"/><path d="M9 3.2V2.2h6v1"/><path d="M3.5 8v15.5a3 3 0 0 0 3 3h11a3 3 0 0 0 3-3V8"/><path d="M8 11v11M12 11v11M16 11v11"/></svg>
</div><div style="position:absolute;left:2784px;top:1747px;width:123px;height:41px;border-radius:6px;background:#977c00"></div><div style="position:absolute;left:3409px;top:1740px;width:188px;height:62px">
 <div style="position:absolute;left:0;top:0;width:60px;height:58px;border:2px solid #a78bfa;border-radius:7px 0 0 7px"></div>
 <div style="position:absolute;left:62px;top:0;width:59px;height:58px;border:2px solid #a9afbd;border-left:2px solid #a9afbd"></div>
 <div style="position:absolute;left:124px;top:0;width:60px;height:58px;border:2px solid #f25f5c;border-radius:0 7px 7px 0"></div>
 <svg style="position:absolute;left:18px;top:17px" width="28" height="28" viewBox="0 0 16 16" fill="#9a87fb"><path d="M16 8s-3-5.5-8-5.5S0 8 0 8s3 5.5 8 5.5S16 8 16 8M1.173 8a13 13 0 0 1 1.66-2.043C4.12 4.668 5.88 3.5 8 3.5s3.879 1.168 5.168 2.457A13 13 0 0 1 14.828 8q-.086.13-.195.288c-.335.48-.83 1.12-1.465 1.755C11.879 11.332 10.119 12.5 8 12.5s-3.879-1.168-5.168-2.457A13 13 0 0 1 1.172 8z"/><path d="M8 5.5a2.5 2.5 0 1 0 0 5 2.5 2.5 0 0 0 0-5M4.5 8a3.5 3.5 0 1 1 7 0 3.5 3.5 0 0 1-7 0"/></svg>
 <svg style="position:absolute;left:80px;top:17px" width="28" height="28" viewBox="0 0 16 16" fill="#a9afbd"><path d="M12.146.146a.5.5 0 0 1 .708 0l3 3a.5.5 0 0 1 0 .708l-10 10a.5.5 0 0 1-.168.11l-5 2a.5.5 0 0 1-.65-.65l2-5a.5.5 0 0 1 .11-.168zM11.207 2.5 13.5 4.793 14.793 3.5 12.5 1.207zm1.586 3L10.5 3.207 4 9.707V10h.5a.5.5 0 0 1 .5.5v.5h.5a.5.5 0 0 1 .5.5v.5h.293zm-9.761 5.175-.106.106-1.528 3.821 3.821-1.528.106-.106A.5.5 0 0 1 5 12.5V12h-.5a.5.5 0 0 1-.5-.5V11h-.5a.5.5 0 0 1-.468-.325"/></svg>
 <svg style="position:absolute;left:144px;top:16px" width="24" height="28" viewBox="0 0 24 28" fill="none" stroke="#f25f5c" stroke-width="2.2"><rect x="1.5" y="3.5" width="21" height="4" rx="1.5"/><path d="M9 3.2V2.2h6v1"/><path d="M3.5 8v15.5a3 3 0 0 0 3 3h11a3 3 0 0 0 3-3V8"/><path d="M8 11v11M12 11v11M16 11v11"/></svg>
</div>
<div class="t" style="left:318.30px;top:65.71px;font-size:32px;line-height:32px;color:#a2a5ad;letter-spacing:-0.056px;">Dashboard</div><div class="t" style="left:546.40px;top:65.71px;font-size:32px;line-height:32px;color:#a2a5ad;letter-spacing:0.025px;">Customers</div><div class="t" style="left:773.20px;top:65.71px;font-size:32px;line-height:32px;color:#a2a5ad;letter-spacing:0.306px;">Properties</div><div class="t" style="left:994.80px;top:65.71px;font-size:32px;line-height:32px;color:#ffffff;letter-spacing:-0.628px;">Deals</div><div class="t" style="left:1146.60px;top:65.71px;font-size:32px;line-height:32px;color:#a2a5ad;letter-spacing:-0.447px;">Open Houses</div><div class="t" style="left:1410.40px;top:65.71px;font-size:32px;line-height:32px;color:#a2a5ad;letter-spacing:0.092px;">Reports</div><div class="t" style="left:1596.00px;top:65.71px;font-size:32px;line-height:32px;color:#a2a5ad;letter-spacing:-0.011px;">Financial Tools</div><div class="t" style="left:1881.00px;top:65.71px;font-size:32px;line-height:32px;color:#a2a5ad;letter-spacing:0.210px;">AI Broker</div><div class="t" style="left:2089.60px;top:65.71px;font-size:32px;line-height:32px;color:#a2a5ad;letter-spacing:-0.400px;">Calendar</div><div class="t" style="left:2290.40px;top:65.71px;font-size:32px;line-height:32px;color:#a2a5ad;letter-spacing:0.080px;">Vendors</div><div class="t" style="left:2481.00px;top:65.71px;font-size:32px;line-height:32px;color:#a2a5ad;letter-spacing:-0.145px;">Agents</div><div class="t" style="left:2652.00px;top:65.71px;font-size:32px;line-height:32px;color:#a2a5ad;letter-spacing:0.461px;">Help</div><div class="t" style="left:3514.20px;top:45.65px;font-size:29px;line-height:29px;color:#a0a3ab;font-weight:700;letter-spacing:-0.705px;">Kurt Petersen</div><div class="t" style="left:3344.30px;top:87.77px;font-size:28.5px;line-height:28.5px;color:#8a8e98;letter-spacing:-0.331px;">Royal Shell Real Estate, Inc.</div><div class="t" style="left:29.70px;top:240.88px;font-size:56px;line-height:56px;color:#f8f9fa;-webkit-text-stroke:1.3px #f8f9fa;">Deals</div><div class="t" style="left:213.50px;top:252.59px;font-size:43px;line-height:43px;color:#ffffff;font-weight:700;letter-spacing:3.585px;">10</div><div class="t" style="left:48.20px;top:400.16px;font-size:33px;line-height:33px;color:#f8f9fa;letter-spacing:-1.281px;">Search</div><div class="t" style="left:1267.90px;top:400.06px;font-size:33px;line-height:33px;color:#f8f9fa;letter-spacing:-0.512px;">Payment Status</div><div class="t" style="left:69.70px;top:472.36px;font-size:33px;line-height:33px;color:#c3c6cc;letter-spacing:-0.222px;">Deal label, customer, or property...</div><div class="t" style="left:1291.00px;top:473.56px;font-size:33px;line-height:33px;color:#f8f9fa;letter-spacing:-0.486px;">All Statuses</div><div class="t" style="left:2245.30px;top:472.16px;font-size:33px;line-height:33px;color:#a9aebb;letter-spacing:0.172px;">Filter</div><div class="t" style="left:2418.70px;top:472.16px;font-size:33px;line-height:33px;color:#a9aebb;letter-spacing:-1.067px;">Clear</div><div class="t" style="left:2601.00px;top:472.16px;font-size:33px;line-height:33px;color:#ffffff;letter-spacing:-0.918px;">Add Deal</div><div class="t" style="left:62.90px;top:661.01px;font-size:32px;line-height:32px;color:#f8f9fa;font-weight:700;letter-spacing:0.899px;">Deal</div><div class="t" style="left:484.60px;top:661.01px;font-size:32px;line-height:32px;color:#f8f9fa;font-weight:700;letter-spacing:-0.515px;">Customer</div><div class="t" style="left:1103.90px;top:661.01px;font-size:32px;line-height:32px;color:#f8f9fa;font-weight:700;letter-spacing:-0.042px;">Property</div><div class="t" style="left:1723.50px;top:661.01px;font-size:32px;line-height:32px;color:#f8f9fa;font-weight:700;letter-spacing:-0.400px;">Sale Price</div><div class="t" style="left:2087.20px;top:661.01px;font-size:32px;line-height:32px;color:#f8f9fa;font-weight:700;letter-spacing:-0.865px;">Commission</div><div class="t" style="left:2421.30px;top:661.01px;font-size:32px;line-height:32px;color:#f8f9fa;font-weight:700;letter-spacing:-0.242px;">Referral Agent</div><div class="t" style="left:2785.10px;top:661.01px;font-size:32px;line-height:32px;color:#f8f9fa;font-weight:700;letter-spacing:-0.140px;">Status</div><div class="t" style="left:3114.80px;top:661.01px;font-size:32px;line-height:32px;color:#f8f9fa;font-weight:700;letter-spacing:-0.616px;">Closing Date</div><div class="t" style="left:3409.90px;top:661.01px;font-size:32px;line-height:32px;color:#f8f9fa;font-weight:700;letter-spacing:-0.791px;">Actions</div><div class="t" style="left:63.30px;top:742.61px;font-size:32px;line-height:32px;color:#7a5cfe;font-weight:700;letter-spacing:0.646px;">Deal #25</div><div class="t" style="left:64.30px;top:793.72px;font-size:28.2px;line-height:28.2px;color:#c5c7cd;letter-spacing:-0.120px;">Contract: Oct <span style="letter-spacing:1.09px">23</span>, <span style="letter-spacing:1.09px">202</span>5</div><div class="t" style="left:484.50px;top:742.61px;font-size:32px;line-height:32px;color:#f3f4f6;letter-spacing:-0.310px;">Dodona Robocci</div><div class="t" style="left:484.50px;top:793.72px;font-size:28.2px;line-height:28.2px;color:#c5c7cd;letter-spacing:-0.120px;">Buyer</div><div class="t" style="left:1104.90px;top:742.61px;font-size:32px;line-height:32px;color:#f3f4f6;letter-spacing:-0.310px;"><span style="letter-spacing:1.44px">87</span>6 Cherry Creek Lane</div><div class="t" style="left:1105.90px;top:793.72px;font-size:28.2px;line-height:28.2px;color:#c5c7cd;letter-spacing:-0.120px;">Aurora, Colorado</div><div class="t" style="left:1723.30px;top:742.61px;font-size:32px;line-height:32px;color:#f3f4f6;font-weight:700;letter-spacing:-0.970px;">$<span style="letter-spacing:1.59px">8,000,000.0</span>0</div><div class="t" style="left:1721.30px;top:793.72px;font-size:28.2px;line-height:28.2px;color:#c5c7cd;letter-spacing:-0.120px;">List: $<span style="letter-spacing:1.09px">315,000.0</span>0</div><div class="t" style="left:2088.20px;top:742.61px;font-size:32px;line-height:32px;color:#f3f4f6;font-weight:700;letter-spacing:-0.970px;">$<span style="letter-spacing:1.59px">240,000.0</span>0</div><div class="t" style="left:2086.20px;top:793.72px;font-size:28.2px;line-height:28.2px;color:#c5c7cd;letter-spacing:-0.120px;">Net: $<span style="letter-spacing:1.09px">240,000.0</span>0</div><div class="t" style="left:2421.30px;top:742.61px;font-size:32px;line-height:32px;color:#c5c7cd;letter-spacing:-0.310px;">None</div><div class="t" style="left:3114.30px;top:742.61px;font-size:32px;line-height:32px;color:#f3f4f6;letter-spacing:-0.310px;">Nov <span style="letter-spacing:1.44px">24</span>, <span style="letter-spacing:1.44px">202</span>5</div><div class="t" style="left:3114.30px;top:793.72px;font-size:28.2px;line-height:28.2px;color:#c5c7cd;letter-spacing:-0.120px;">Due: Nov <span style="letter-spacing:1.09px">2</span>3</div><div class="t" style="left:2800.00px;top:748.99px;font-size:26px;line-height:26px;color:#1e2233;font-weight:700;letter-spacing:-1.678px;">Pending</div><div class="t" style="left:63.30px;top:872.61px;font-size:32px;line-height:32px;color:#7a5cfe;font-weight:700;letter-spacing:0.503px;">Deal #24</div><div class="t" style="left:64.30px;top:923.72px;font-size:28.2px;line-height:28.2px;color:#c5c7cd;letter-spacing:-0.120px;">Contract: Sep <span style="letter-spacing:1.09px">21</span>, <span style="letter-spacing:1.09px">202</span>5</div><div class="t" style="left:484.50px;top:872.61px;font-size:32px;line-height:32px;color:#f3f4f6;letter-spacing:-0.310px;">Kurt Petersen</div><div class="t" style="left:484.50px;top:923.72px;font-size:28.2px;line-height:28.2px;color:#c5c7cd;letter-spacing:-0.120px;">Buyer</div><div class="t" style="left:1104.90px;top:872.61px;font-size:32px;line-height:32px;color:#f3f4f6;letter-spacing:-0.310px;"><span style="letter-spacing:1.44px">78</span>9 University Heights</div><div class="t" style="left:1103.90px;top:923.72px;font-size:28.2px;line-height:28.2px;color:#c5c7cd;letter-spacing:-0.120px;">Fort Collins, Colorado</div><div class="t" style="left:1723.30px;top:872.61px;font-size:32px;line-height:32px;color:#f3f4f6;font-weight:700;letter-spacing:-0.970px;">$<span style="letter-spacing:1.59px">480,000.0</span>0</div><div class="t" style="left:1721.30px;top:923.72px;font-size:28.2px;line-height:28.2px;color:#c5c7cd;letter-spacing:-0.120px;">List: $<span style="letter-spacing:1.09px">2,200.0</span>0</div><div class="t" style="left:2088.20px;top:872.61px;font-size:32px;line-height:32px;color:#f3f4f6;font-weight:700;letter-spacing:-0.970px;">$<span style="letter-spacing:1.59px">14,400.0</span>0</div><div class="t" style="left:2086.20px;top:923.72px;font-size:28.2px;line-height:28.2px;color:#c5c7cd;letter-spacing:-0.120px;">Net: $<span style="letter-spacing:1.09px">11,520.0</span>0</div><div class="t" style="left:2421.30px;top:872.61px;font-size:32px;line-height:32px;color:#c5c7cd;letter-spacing:-0.310px;">None</div><div class="t" style="left:3115.30px;top:872.61px;font-size:32px;line-height:32px;color:#f3f4f6;letter-spacing:-0.310px;">Oct <span style="letter-spacing:1.44px">21</span>, <span style="letter-spacing:1.44px">202</span>5</div><div class="t" style="left:3114.30px;top:923.72px;font-size:28.2px;line-height:28.2px;color:#c5c7cd;letter-spacing:-0.120px;">Due: Oct <span style="letter-spacing:1.09px">2</span>1</div><div class="t" style="left:2800.00px;top:878.99px;font-size:26px;line-height:26px;color:#1e2233;font-weight:700;letter-spacing:-1.678px;">Pending</div><div class="t" style="left:63.30px;top:1002.61px;font-size:32px;line-height:32px;color:#7a5cfe;font-weight:700;letter-spacing:0.646px;">Deal #23</div><div class="t" style="left:64.30px;top:1053.72px;font-size:28.2px;line-height:28.2px;color:#c5c7cd;letter-spacing:-0.120px;">Contract: Sep <span style="letter-spacing:1.09px">22</span>, <span style="letter-spacing:1.09px">202</span>5</div><div class="t" style="left:486.50px;top:1002.61px;font-size:32px;line-height:32px;color:#f3f4f6;letter-spacing:-0.310px;">Amanda Foster</div><div class="t" style="left:484.50px;top:1053.72px;font-size:28.2px;line-height:28.2px;color:#c5c7cd;letter-spacing:-0.120px;">Buyer</div><div class="t" style="left:1103.90px;top:1002.61px;font-size:32px;line-height:32px;color:#f3f4f6;letter-spacing:-0.310px;"><span style="letter-spacing:1.44px">1250</span>0 Sunset Ridge Boulevard</div><div class="t" style="left:1105.90px;top:1053.72px;font-size:28.2px;line-height:28.2px;color:#c5c7cd;letter-spacing:-0.120px;">Thornton, Colorado</div><div class="t" style="left:1723.30px;top:1002.61px;font-size:32px;line-height:32px;color:#f3f4f6;font-weight:700;letter-spacing:-0.970px;">$<span style="letter-spacing:1.59px">385,000.0</span>0</div><div class="t" style="left:1721.30px;top:1053.72px;font-size:28.2px;line-height:28.2px;color:#c5c7cd;letter-spacing:-0.120px;">List: $<span style="letter-spacing:1.09px">380,000.0</span>0</div><div class="t" style="left:2088.20px;top:1002.61px;font-size:32px;line-height:32px;color:#f3f4f6;font-weight:700;letter-spacing:-0.970px;">$<span style="letter-spacing:1.59px">11,550.0</span>0</div><div class="t" style="left:2086.20px;top:1053.72px;font-size:28.2px;line-height:28.2px;color:#c5c7cd;letter-spacing:-0.120px;">Net: $<span style="letter-spacing:1.09px">7,363.1</span>2</div><div class="t" style="left:2421.30px;top:1002.61px;font-size:32px;line-height:32px;color:#f3f4f6;font-weight:700;letter-spacing:-0.970px;">Marcus Johnson</div><div class="t" style="left:2422.30px;top:1053.72px;font-size:28.2px;line-height:28.2px;color:#c5c7cd;letter-spacing:-0.120px;"><span style="letter-spacing:1.09px">25.</span>0%</div><div class="t" style="left:2423.30px;top:1101.72px;font-size:28.2px;line-height:28.2px;color:#c5c7cd;letter-spacing:-0.120px;">TX-RE<span style="letter-spacing:1.09px">45678912</span>3</div><div class="t" style="left:3114.30px;top:1002.61px;font-size:32px;line-height:32px;color:#f3f4f6;letter-spacing:-0.310px;">Nov <span style="letter-spacing:1.44px">30</span>, <span style="letter-spacing:1.44px">202</span>5</div><div class="t" style="left:3114.30px;top:1053.72px;font-size:28.2px;line-height:28.2px;color:#c5c7cd;letter-spacing:-0.120px;">Due: Dec <span style="letter-spacing:1.09px">0</span>5</div><div class="t" style="left:2836.70px;top:1002.39px;font-size:26px;line-height:26px;color:#ffffff;font-weight:700;letter-spacing:-1.254px;">Upfront: Pending</div><div class="t" style="left:2852.10px;top:1051.69px;font-size:26px;line-height:26px;color:#ffffff;font-weight:700;letter-spacing:-1.263px;">Final: Pending</div><div class="t" style="left:63.30px;top:1180.61px;font-size:32px;line-height:32px;color:#7a5cfe;font-weight:700;letter-spacing:0.646px;">Deal #22</div><div class="t" style="left:64.30px;top:1231.72px;font-size:28.2px;line-height:28.2px;color:#c5c7cd;letter-spacing:-0.120px;">Contract: Sep <span style="letter-spacing:1.09px">25</span>, <span style="letter-spacing:1.09px">202</span>5</div><div class="t" style="left:485.50px;top:1180.61px;font-size:32px;line-height:32px;color:#f3f4f6;letter-spacing:-0.310px;">Sunset Ridge Development LLC</div><div class="t" style="left:484.50px;top:1231.72px;font-size:28.2px;line-height:28.2px;color:#c5c7cd;letter-spacing:-0.120px;">Investor</div><div class="t" style="left:1103.90px;top:1180.61px;font-size:32px;line-height:32px;color:#f3f4f6;letter-spacing:-0.310px;"><span style="letter-spacing:1.44px">1250</span>0 Sunset Ridge Boulevard</div><div class="t" style="left:1105.90px;top:1231.72px;font-size:28.2px;line-height:28.2px;color:#c5c7cd;letter-spacing:-0.120px;">Thornton, Colorado</div><div class="t" style="left:1723.30px;top:1180.61px;font-size:32px;line-height:32px;color:#f3f4f6;font-weight:700;letter-spacing:-0.970px;">$<span style="letter-spacing:1.59px">375,000.0</span>0</div><div class="t" style="left:1721.30px;top:1231.72px;font-size:28.2px;line-height:28.2px;color:#c5c7cd;letter-spacing:-0.120px;">List: $<span style="letter-spacing:1.09px">380,000.0</span>0</div><div class="t" style="left:2088.20px;top:1180.61px;font-size:32px;line-height:32px;color:#f3f4f6;font-weight:700;letter-spacing:-0.970px;">$<span style="letter-spacing:1.59px">9,375.0</span>0</div><div class="t" style="left:2086.20px;top:1231.72px;font-size:28.2px;line-height:28.2px;color:#c5c7cd;letter-spacing:-0.120px;">Net: $<span style="letter-spacing:1.09px">6,750.0</span>0</div><div class="t" style="left:2421.30px;top:1180.61px;font-size:32px;line-height:32px;color:#f3f4f6;font-weight:700;letter-spacing:-0.970px;">Referral Agent</div><div class="t" style="left:2421.30px;top:1231.72px;font-size:28.2px;line-height:28.2px;color:#c5c7cd;letter-spacing:-0.120px;"><span style="letter-spacing:1.09px">10.</span>0%</div><div class="t" style="left:3114.30px;top:1180.61px;font-size:32px;line-height:32px;color:#f3f4f6;letter-spacing:-0.310px;">Dec <span style="letter-spacing:1.44px">15</span>, <span style="letter-spacing:1.44px">202</span>5</div><div class="t" style="left:3114.30px;top:1231.72px;font-size:28.2px;line-height:28.2px;color:#c5c7cd;letter-spacing:-0.120px;">Due: Dec <span style="letter-spacing:1.09px">2</span>0</div><div class="t" style="left:2857.70px;top:1180.39px;font-size:26px;line-height:26px;color:#ffffff;font-weight:700;letter-spacing:-1.097px;">Upfront: Paid</div><div class="t" style="left:2852.10px;top:1229.69px;font-size:26px;line-height:26px;color:#ffffff;font-weight:700;letter-spacing:-1.263px;">Final: Pending</div><div class="t" style="left:63.30px;top:1310.61px;font-size:32px;line-height:32px;color:#7a5cfe;font-weight:700;letter-spacing:0.646px;">Deal #21</div><div class="t" style="left:64.30px;top:1361.72px;font-size:28.2px;line-height:28.2px;color:#c5c7cd;letter-spacing:-0.120px;">Contract: Sep <span style="letter-spacing:1.09px">20</span>, <span style="letter-spacing:1.09px">202</span>5</div><div class="t" style="left:484.50px;top:1310.61px;font-size:32px;line-height:32px;color:#f3f4f6;letter-spacing:-0.310px;">Robert Martinez</div><div class="t" style="left:484.50px;top:1361.72px;font-size:28.2px;line-height:28.2px;color:#c5c7cd;letter-spacing:-0.120px;">Buyer</div><div class="t" style="left:1104.90px;top:1310.61px;font-size:32px;line-height:32px;color:#f3f4f6;letter-spacing:-0.310px;"><span style="letter-spacing:1.44px">284</span>7 Oakwood Manor Drive</div><div class="t" style="left:1103.90px;top:1361.72px;font-size:28.2px;line-height:28.2px;color:#c5c7cd;letter-spacing:-0.120px;">Denver, Colorado</div><div class="t" style="left:1723.30px;top:1310.61px;font-size:32px;line-height:32px;color:#f3f4f6;font-weight:700;letter-spacing:-0.970px;">$<span style="letter-spacing:1.59px">720,000.0</span>0</div><div class="t" style="left:1721.30px;top:1361.72px;font-size:28.2px;line-height:28.2px;color:#c5c7cd;letter-spacing:-0.120px;">List: $<span style="letter-spacing:1.09px">750,000.0</span>0</div><div class="t" style="left:2088.20px;top:1310.61px;font-size:32px;line-height:32px;color:#f3f4f6;font-weight:700;letter-spacing:-0.970px;">$<span style="letter-spacing:1.59px">21,600.0</span>0</div><div class="t" style="left:2086.20px;top:1361.72px;font-size:28.2px;line-height:28.2px;color:#c5c7cd;letter-spacing:-0.120px;">Net: $<span style="letter-spacing:1.09px">1,350.0</span>0</div><div class="t" style="left:2423.30px;top:1310.61px;font-size:32px;line-height:32px;color:#f3f4f6;font-weight:700;letter-spacing:-0.970px;">Jessica Martinez</div><div class="t" style="left:2422.30px;top:1361.72px;font-size:28.2px;line-height:28.2px;color:#c5c7cd;letter-spacing:-0.120px;"><span style="letter-spacing:1.09px">75.</span>0%</div><div class="t" style="left:2423.30px;top:1409.72px;font-size:28.2px;line-height:28.2px;color:#c5c7cd;letter-spacing:-0.120px;">AZ-LIC<span style="letter-spacing:1.09px">98765432</span>1</div><div class="t" style="left:3114.30px;top:1310.61px;font-size:32px;line-height:32px;color:#f3f4f6;letter-spacing:-0.310px;">Nov <span style="letter-spacing:1.44px">10</span>, <span style="letter-spacing:1.44px">202</span>5</div><div class="t" style="left:3114.30px;top:1361.72px;font-size:28.2px;line-height:28.2px;color:#c5c7cd;letter-spacing:-0.120px;">Due: Nov <span style="letter-spacing:1.09px">1</span>5</div><div class="t" style="left:2800.00px;top:1316.99px;font-size:26px;line-height:26px;color:#1e2233;font-weight:700;letter-spacing:-1.678px;">Pending</div><div class="t" style="left:63.30px;top:1488.61px;font-size:32px;line-height:32px;color:#7a5cfe;font-weight:700;letter-spacing:0.646px;">Deal #17</div><div class="t" style="left:64.30px;top:1539.72px;font-size:28.2px;line-height:28.2px;color:#c5c7cd;letter-spacing:-0.120px;">Contract: Sep <span style="letter-spacing:1.09px">10</span>, <span style="letter-spacing:1.09px">202</span>5</div><div class="t" style="left:485.50px;top:1488.61px;font-size:32px;line-height:32px;color:#f3f4f6;letter-spacing:-0.310px;">Sarah Johnson</div><div class="t" style="left:484.50px;top:1539.72px;font-size:28.2px;line-height:28.2px;color:#c5c7cd;letter-spacing:-0.120px;">Buyer</div><div class="t" style="left:1105.90px;top:1488.61px;font-size:32px;line-height:32px;color:#f3f4f6;letter-spacing:-0.310px;"><span style="letter-spacing:1.44px">465</span>1 Ridge View Circle</div><div class="t" style="left:1103.90px;top:1539.72px;font-size:28.2px;line-height:28.2px;color:#c5c7cd;letter-spacing:-0.120px;">Highlands Ranch, Colorado</div><div class="t" style="left:1723.30px;top:1488.61px;font-size:32px;line-height:32px;color:#f3f4f6;font-weight:700;letter-spacing:-0.970px;">$<span style="letter-spacing:1.59px">420,000.0</span>0</div><div class="t" style="left:1721.30px;top:1539.72px;font-size:28.2px;line-height:28.2px;color:#c5c7cd;letter-spacing:-0.120px;">List: $<span style="letter-spacing:1.09px">425,000.0</span>0</div><div class="t" style="left:2088.20px;top:1488.61px;font-size:32px;line-height:32px;color:#f3f4f6;font-weight:700;letter-spacing:-0.970px;">$<span style="letter-spacing:1.59px">12,600.0</span>0</div><div class="t" style="left:2086.20px;top:1539.72px;font-size:28.2px;line-height:28.2px;color:#c5c7cd;letter-spacing:-0.120px;">Net: $<span style="letter-spacing:1.09px">12,600.0</span>0</div><div class="t" style="left:2421.30px;top:1488.61px;font-size:32px;line-height:32px;color:#c5c7cd;letter-spacing:-0.310px;">None</div><div class="t" style="left:3115.30px;top:1488.61px;font-size:32px;line-height:32px;color:#f3f4f6;letter-spacing:-0.310px;">Oct <span style="letter-spacing:1.44px">15</span>, <span style="letter-spacing:1.44px">202</span>5</div><div class="t" style="left:3114.30px;top:1539.72px;font-size:28.2px;line-height:28.2px;color:#c5c7cd;letter-spacing:-0.120px;">Due: Oct <span style="letter-spacing:1.09px">2</span>0</div><div class="t" style="left:2836.70px;top:1488.39px;font-size:26px;line-height:26px;color:#ffffff;font-weight:700;letter-spacing:-1.254px;">Upfront: Pending</div><div class="t" style="left:2852.10px;top:1537.69px;font-size:26px;line-height:26px;color:#ffffff;font-weight:700;letter-spacing:-1.263px;">Final: Pending</div><div class="t" style="left:63.30px;top:1618.61px;font-size:32px;line-height:32px;color:#7a5cfe;font-weight:700;letter-spacing:0.646px;">Deal #18</div><div class="t" style="left:64.30px;top:1669.72px;font-size:28.2px;line-height:28.2px;color:#c5c7cd;letter-spacing:-0.120px;">Contract: Sep <span style="letter-spacing:1.09px">18</span>, <span style="letter-spacing:1.09px">202</span>5</div><div class="t" style="left:484.50px;top:1618.61px;font-size:32px;line-height:32px;color:#f3f4f6;letter-spacing:-0.310px;">David Thompson</div><div class="t" style="left:484.50px;top:1669.72px;font-size:28.2px;line-height:28.2px;color:#c5c7cd;letter-spacing:-0.120px;">Investor</div><div class="t" style="left:1104.90px;top:1618.61px;font-size:32px;line-height:32px;color:#f3f4f6;letter-spacing:-0.310px;"><span style="letter-spacing:1.44px">87</span>6 Cherry Creek Lane</div><div class="t" style="left:1105.90px;top:1669.72px;font-size:28.2px;line-height:28.2px;color:#c5c7cd;letter-spacing:-0.120px;">Aurora, Colorado</div><div class="t" style="left:1723.30px;top:1618.61px;font-size:32px;line-height:32px;color:#f3f4f6;font-weight:700;letter-spacing:-0.970px;">$<span style="letter-spacing:1.59px">300,000.0</span>0</div><div class="t" style="left:1721.30px;top:1669.72px;font-size:28.2px;line-height:28.2px;color:#c5c7cd;letter-spacing:-0.120px;">List: $<span style="letter-spacing:1.09px">315,000.0</span>0</div><div class="t" style="left:2088.20px;top:1618.61px;font-size:32px;line-height:32px;color:#f3f4f6;font-weight:700;letter-spacing:-0.970px;">$<span style="letter-spacing:1.59px">9,000.0</span>0</div><div class="t" style="left:2086.20px;top:1669.72px;font-size:28.2px;line-height:28.2px;color:#c5c7cd;letter-spacing:-0.120px;">Net: $<span style="letter-spacing:1.09px">7,650.0</span>0</div><div class="t" style="left:2421.30px;top:1618.61px;font-size:32px;line-height:32px;color:#c5c7cd;letter-spacing:-0.310px;">None</div><div class="t" style="left:3115.30px;top:1618.61px;font-size:32px;line-height:32px;color:#f3f4f6;letter-spacing:-0.310px;">Sep <span style="letter-spacing:1.44px">30</span>, <span style="letter-spacing:1.44px">202</span>5</div><div class="t" style="left:3114.30px;top:1669.72px;font-size:28.2px;line-height:28.2px;color:#c5c7cd;letter-spacing:-0.120px;">Due: Oct <span style="letter-spacing:1.09px">0</span>5</div><div class="t" style="left:2800.00px;top:1624.99px;font-size:26px;line-height:26px;color:#1e2233;font-weight:700;letter-spacing:-1.678px;">Pending</div><div class="t" style="left:63.30px;top:1748.61px;font-size:32px;line-height:32px;color:#7a5cfe;font-weight:700;letter-spacing:0.646px;">Deal #16</div><div class="t" style="left:64.30px;top:1799.72px;font-size:28.2px;line-height:28.2px;color:#c5c7cd;letter-spacing:-0.120px;">Contract: Sep <span style="letter-spacing:1.09px">15</span>, <span style="letter-spacing:1.09px">202</span>5</div><div class="t" style="left:484.50px;top:1748.61px;font-size:32px;line-height:32px;color:#f3f4f6;letter-spacing:-0.310px;">Michael Chen</div><div class="t" style="left:484.50px;top:1799.72px;font-size:28.2px;line-height:28.2px;color:#c5c7cd;letter-spacing:-0.120px;">Buyer</div><div class="t" style="left:1104.90px;top:1748.61px;font-size:32px;line-height:32px;color:#f3f4f6;letter-spacing:-0.310px;"><span style="letter-spacing:1.44px">284</span>7 Oakwood Manor Drive</div><div class="t" style="left:1103.90px;top:1799.72px;font-size:28.2px;line-height:28.2px;color:#c5c7cd;letter-spacing:-0.120px;">Denver, Colorado</div><div class="t" style="left:1723.30px;top:1748.61px;font-size:32px;line-height:32px;color:#f3f4f6;font-weight:700;letter-spacing:-0.970px;">$<span style="letter-spacing:1.59px">730,000.0</span>0</div><div class="t" style="left:1721.30px;top:1799.72px;font-size:28.2px;line-height:28.2px;color:#c5c7cd;letter-spacing:-0.120px;">List: $<span style="letter-spacing:1.09px">750,000.0</span>0</div><div class="t" style="left:2088.20px;top:1748.61px;font-size:32px;line-height:32px;color:#f3f4f6;font-weight:700;letter-spacing:-0.970px;">$<span style="letter-spacing:1.59px">21,900.0</span>0</div><div class="t" style="left:2086.20px;top:1799.72px;font-size:28.2px;line-height:28.2px;color:#c5c7cd;letter-spacing:-0.120px;">Net: $<span style="letter-spacing:1.09px">13,961.2</span>5</div><div class="t" style="left:2421.30px;top:1748.61px;font-size:32px;line-height:32px;color:#f3f4f6;font-weight:700;letter-spacing:-0.970px;">Referral Agent</div><div class="t" style="left:2421.30px;top:1799.72px;font-size:28.2px;line-height:28.2px;color:#c5c7cd;letter-spacing:-0.120px;"><span style="letter-spacing:1.09px">15.</span>0%</div><div class="t" style="left:3115.30px;top:1748.61px;font-size:32px;line-height:32px;color:#f3f4f6;letter-spacing:-0.310px;">Oct <span style="letter-spacing:1.44px">20</span>, <span style="letter-spacing:1.44px">202</span>5</div><div class="t" style="left:3114.30px;top:1799.72px;font-size:28.2px;line-height:28.2px;color:#c5c7cd;letter-spacing:-0.120px;">Due: Oct <span style="letter-spacing:1.09px">2</span>5</div><div class="t" style="left:2800.00px;top:1754.99px;font-size:26px;line-height:26px;color:#1e2233;font-weight:700;letter-spacing:-1.678px;">Pending</div>
</body></html>
